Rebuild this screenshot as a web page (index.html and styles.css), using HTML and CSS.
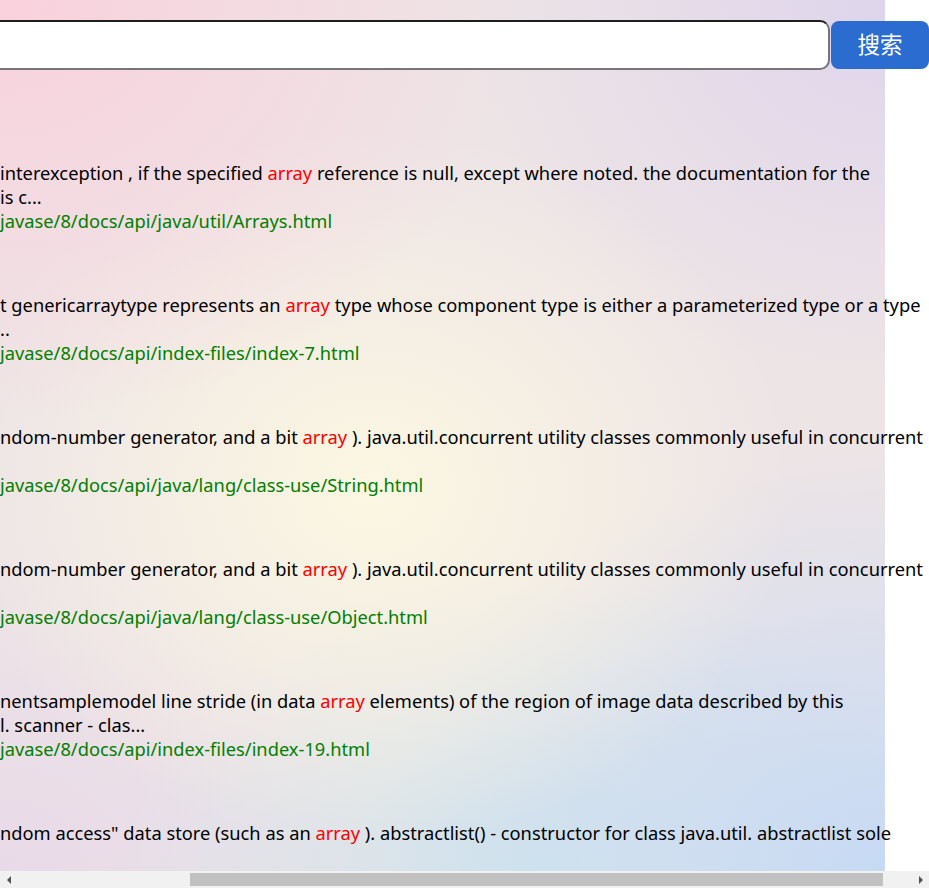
FILE: index.html
```html
<!DOCTYPE html>
<html lang="zh-CN">
<head>
<meta charset="utf-8">
<title>搜索</title>
<link rel="stylesheet" href="styles.css">
</head>
<body>
<div class="page">
  <form class="search">
    <input class="search-input" type="text">
    <button class="search-btn" type="button">搜索</button>
  </form>
  <div class="results">
    <div class="result">
      <p class="desc">interexception , if the specified <em>array</em> reference is null, except where noted. the documentation for the<br>is c...</p>
      <a class="url">javase/8/docs/api/java/util/Arrays.html</a>
    </div>
    <div class="result">
      <p class="desc">t genericarraytype represents an <em>array</em> type whose component type is either a parameterized type or a type<br>..</p>
      <a class="url">javase/8/docs/api/index-files/index-7.html</a>
    </div>
    <div class="result">
      <p class="desc">ndom-number generator, and a bit <em>array</em> ). java.util.concurrent utility classes commonly useful in concurrent<br>&nbsp;</p>
      <a class="url">javase/8/docs/api/java/lang/class-use/String.html</a>
    </div>
    <div class="result">
      <p class="desc">ndom-number generator, and a bit <em>array</em> ). java.util.concurrent utility classes commonly useful in concurrent<br>&nbsp;</p>
      <a class="url">javase/8/docs/api/java/lang/class-use/Object.html</a>
    </div>
    <div class="result">
      <p class="desc">nentsamplemodel line stride (in data <em>array</em> elements) of the region of image data described by this<br>l. scanner - clas...</p>
      <a class="url">javase/8/docs/api/index-files/index-19.html</a>
    </div>
    <div class="result">
      <p class="desc">ndom access" data store (such as an <em>array</em> ). abstractlist() - constructor for class java.util. abstractlist sole</p>
    </div>
  </div>
</div>
<div class="hscroll">
  <span class="arrow arrow-left"></span>
  <div class="track"><div class="thumb"></div></div>
  <span class="arrow arrow-right"></span>
</div>
</body>
</html>
```

FILE: styles.css
```css
html, body {
  margin: 0;
  padding: 0;
  background: #ffffff;
  overflow: hidden;
  height: 100%;
}

body {
  font-family: "Noto Sans", "Open Sans", "Noto Sans CJK SC", sans-serif;
  font-size: 18.3px;
  color: #000;
}

.page {
  width: 885px;
  height: 871px;
  background:
    radial-gradient(ellipse 520px 420px at 0% 0%, rgba(250, 208, 220, 0.95), rgba(250, 208, 220, 0) 100%),
    radial-gradient(ellipse 420px 380px at 100% 0%, rgba(222, 212, 236, 0.95), rgba(222, 212, 236, 0) 100%),
    radial-gradient(ellipse 420px 360px at 42% 56%, rgba(252, 247, 226, 1), rgba(252, 247, 226, 0) 100%),
    radial-gradient(ellipse 520px 420px at 100% 100%, rgba(198, 218, 244, 1), rgba(198, 218, 244, 0) 100%),
    radial-gradient(ellipse 420px 300px at 60% 100%, rgba(206, 228, 236, 0.9), rgba(206, 228, 236, 0) 100%),
    radial-gradient(ellipse 380px 320px at 0% 100%, rgba(232, 218, 232, 1), rgba(232, 218, 232, 0) 100%),
    #ede4e6;
}

.search {
  display: flex;
  align-items: center;
  padding-top: 20px;
  margin: 0;
}

.search-input {
  box-sizing: border-box;
  flex: none;
  width: 850px;
  height: 50px;
  margin-left: -20px;
  border: 2px solid #767676;
  border-top-color: #1e1e1e;
  border-left-color: #1e1e1e;
  border-radius: 10px;
  background: #fff;
  outline: none;
  font-size: 18px;
}

.search-btn {
  box-sizing: border-box;
  flex: none;
  width: 98px;
  height: 48px;
  margin-left: 1px;
  border: none;
  border-radius: 8px;
  background: #2b6cd1;
  color: #fff;
  font-family: "Noto Sans CJK SC", sans-serif;
  font-size: 22.5px;
  line-height: 1;
  padding: 0 0 4px 0;
}

.results {
  padding-top: 91px;
}

.result {
  margin-bottom: 60px;
  line-height: 24px;
  white-space: nowrap;
}

.desc {
  margin: 0;
}

.desc em {
  font-style: normal;
  color: #ff0000;
}

.url {
  display: block;
  color: #008000;
  text-decoration: none;
}

.hscroll {
  position: fixed;
  left: 0;
  right: 0;
  bottom: 0;
  height: 17px;
  background: #f1f1f1;
  display: flex;
  align-items: stretch;
}

.arrow {
  width: 17px;
  flex: none;
  display: flex;
  align-items: center;
  justify-content: center;
}

.arrow::before {
  content: "";
  width: 0;
  height: 0;
  border-top: 4px solid transparent;
  border-bottom: 4px solid transparent;
}

.arrow-left::before {
  border-right: 4px solid #505050;
}

.arrow-right::before {
  border-left: 4px solid #505050;
}

.track {
  flex: 1;
  display: flex;
  align-items: center;
}

.thumb {
  margin-left: 173px;
  width: 693px;
  height: 13px;
  background: #c1c1c1;
}
```
